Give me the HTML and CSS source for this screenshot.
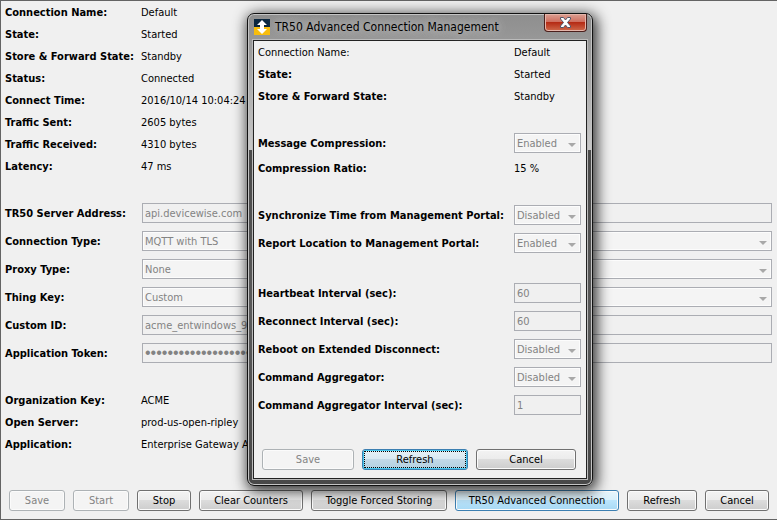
FILE: index.html
```
<!DOCTYPE html>
<html lang="en">
<head>
    <meta charset="utf-8">
    <title>TR50 Advanced Connection Management</title>
    <meta name="viewport" content="width=device-width, initial-scale=1">
    <link rel="stylesheet" href="styles.css">
</head>
<body>
    <main class="panel">
        <dl class="info">
            <dt>Connection Name:</dt><dd>Default</dd>
            <dt>State:</dt><dd>Started</dd>
            <dt>Store &amp; Forward State:</dt><dd>Standby</dd>
            <dt>Status:</dt><dd>Connected</dd>
            <dt>Connect Time:</dt><dd>2016/10/14 10:04:24</dd>
            <dt>Traffic Sent:</dt><dd>2605 bytes</dd>
            <dt>Traffic Received:</dt><dd>4310 bytes</dd>
            <dt>Latency:</dt><dd>47 ms</dd>
        </dl>
        <form class="fields">
            <label for="server">TR50 Server Address:</label>
            <input type="text" id="server" value="api.devicewise.com" disabled>
            <label for="connType">Connection Type:</label>
            <span class="combo"><select id="connType" disabled><option>MQTT with TLS</option></select></span>
            <label for="proxyType">Proxy Type:</label>
            <span class="combo"><select id="proxyType" disabled><option>None</option></select></span>
            <label for="thingKey">Thing Key:</label>
            <span class="combo"><select id="thingKey" disabled><option>Custom</option></select></span>
            <label for="customId">Custom ID:</label>
            <input type="text" id="customId" value="acme_entwindows_9_" disabled>
            <label for="token">Application Token:</label>
            <input type="password" id="token" class="token" value="********************" autocomplete="off" disabled>
        </form>
        <dl class="info">
            <dt>Organization Key:</dt><dd>ACME</dd>
            <dt>Open Server:</dt><dd>prod-us-open-ripley</dd>
            <dt>Application:</dt><dd>Enterprise Gateway A</dd>
        </dl>
        <div class="buttons">
            <button class="w-small" disabled>Save</button>
            <button class="w-small" disabled>Start</button>
            <button class="w-stop">Stop</button>
            <button class="w-clear">Clear Counters</button>
            <button class="w-toggle">Toggle Forced Storing</button>
            <button class="w-advanced active">TR50 Advanced Connection</button>
            <button class="w-refresh">Refresh</button>
            <button class="w-cancel">Cancel</button>
        </div>
    </main>

    <section class="dialog" role="dialog" aria-labelledby="dialogTitle">
        <header class="titlebar">
            <svg class="logo" viewBox="0 0 16 16" width="16" height="16" aria-hidden="true">
                <rect width="16" height="8" fill="#0b2740"/>
                <rect y="8" width="16" height="8" fill="#f8bd0c"/>
                <path d="M8 1l5 5h-3v4h3l-5 5-5-5h3V6H3z" fill="#fff"/>
            </svg>
            <h1 id="dialogTitle">TR50 Advanced Connection Management</h1>
            <button class="close" aria-label="Close">
                <svg viewBox="0 0 13 11" width="13" height="11">
                    <path d="M1.500 .5h3l2 2.500 2-2.500h3v1.500L8.500 5.500l3 3.500v1.500h-3l-2-2.500-2 2.500h-3V9l3-3.500-3-3.500z" fill="#fff" stroke="#52566a"/>
                </svg>
            </button>
        </header>
        <div class="client">
            <dl class="info">
                <dt class="plain">Connection Name:</dt><dd>Default</dd>
                <dt>State:</dt><dd>Started</dd>
                <dt>Store &amp; Forward State:</dt><dd>Standby</dd>
            </dl>
            <form class="fields">
                <label for="compression">Message Compression:</label>
                <span class="combo"><select id="compression" disabled><option>Enabled</option></select></span>
            </form>
            <dl class="info joined">
                <dt>Compression Ratio:</dt><dd>15 %</dd>
            </dl>
            <form class="fields">
                <label for="syncTime">Synchronize Time from Management Portal:</label>
                <span class="combo"><select id="syncTime" disabled><option>Disabled</option></select></span>
                <label for="location">Report Location to Management Portal:</label>
                <span class="combo"><select id="location" disabled><option>Enabled</option></select></span>
            </form>
            <form class="fields">
                <label for="heartbeat">Heartbeat Interval (sec):</label>
                <input type="text" id="heartbeat" value="60" disabled>
                <label for="reconnect">Reconnect Interval (sec):</label>
                <input type="text" id="reconnect" value="60" disabled>
                <label for="reboot">Reboot on Extended Disconnect:</label>
                <span class="combo"><select id="reboot" disabled><option>Disabled</option></select></span>
                <label for="aggregator">Command Aggregator:</label>
                <span class="combo"><select id="aggregator" disabled><option>Disabled</option></select></span>
                <label for="aggInterval">Command Aggregator Interval (sec):</label>
                <input type="text" id="aggInterval" value="1" disabled>
            </form>
            <div class="buttons">
                <button class="w-save" disabled>Save</button>
                <button class="w-default focused">Refresh</button>
                <button class="w-close">Cancel</button>
            </div>
        </div>
    </section>
</body>
</html>
```
FILE: styles.css
```
* {
    box-sizing: border-box;
}
body {
    margin: 0;
    min-height: 100vh;
    display: flex;
    background-color: #f0f0f0;
    color: #000;
}
body, input, select, button {
    font-family: "DejaVu Sans Condensed", Tahoma, sans-serif;
    font-size: 11px;
}
.panel {
    flex: 1;
    display: flex;
    flex-direction: column;
    gap: 22px;
    border: 1px solid #646464;
    padding: 0 4px 8px;
}
.info, .fields {
    display: grid;
    grid-template-columns: 136px 1fr;
    align-items: center;
    margin: 0;
    white-space: nowrap;
}
.info {
    grid-auto-rows: 22px;
}
.fields {
    grid-template-columns: 137px 1fr;
    grid-auto-rows: 28px;
    padding-right: 1px;
}
dt, label {
    font-weight: bold;
}
dd {
    margin: 0;
}
.plain {
    font-weight: normal;
}
input, select {
    width: 100%;
    height: 20px;
    margin: 0;
    padding: 0 2px;
    border: 1px solid #abadb3;
    border-radius: 0;
    background-color: #f0f0f0;
    color: #838383;
    opacity: 1;
}
/* bigger bullets */
.token {
    font-family: "Liberation Sans", Arial, sans-serif;
    font-size: 16px;
}
select {
    display: block;
    appearance: none;
    background-color: #f4f4f4;
    box-shadow: inset 0 0 0 1px #fcfcfc;
}
.combo {
    position: relative;
}
/* drop-down arrow */
.combo::after {
    content: "";
    position: absolute;
    right: 5px;
    top: 10px;
    border: 4px solid transparent;
    border-top-color: #a8a8a8;
    border-bottom: 0;
}
.buttons {
    display: flex;
    gap: 8px;
    margin-top: auto;
    padding: 0 4px;
}
button {
    height: 21px;
    padding: 0;
    border: 1px solid #707070;
    border-radius: 3px;
    background: linear-gradient(#f3f3f3, #ebebeb 50%, #dcdcdc 50%, #cdcdcd);
    box-shadow: inset 0 0 0 1px #fbfbfb;
    color: #000;
    white-space: nowrap;
}
button:disabled {
    border-color: #adb2b5;
    background: #f4f4f4;
    color: #838383;
}
.active {
    border-color: #3c7fb1;
    background: linear-gradient(#e8f5fc, #d8f0fc 50%, #bce5fc 50%, #a7d9f5);
}
.w-small { width: 56px; }
.w-stop { width: 54px; }
.w-clear { width: 104px; }
.w-toggle { width: 136px; }
.w-advanced { width: 164px; }
.w-refresh { width: 70px; }
.w-cancel { width: 64px; }
.w-save { width: 92px; }
.w-default { width: 106px; }
.w-close { width: 100px; }

.dialog {
    position: absolute;
    left: 247px;
    top: 13px;
    width: 346px;
    padding: 0 5px 6px;
    border: 1px solid #111;
    border-radius: 7px;
    background: linear-gradient(#8e8e8e, #999 30px, #c8c8c8 136px, #4a4a4a 136px, #5a5a5a 300px, #484848);
    box-shadow: inset 0 0 0 1px #c4c4c4, 2px 3px 14px 2px rgba(0, 0, 0, 0.8);
}
.titlebar {
    display: flex;
    align-items: center;
    height: 26px;
    gap: 5px;
    padding-left: 1px;
}
.titlebar h1 {
    flex: 1;
    margin: 0;
    font-size: 12px;
    font-weight: normal;
    text-shadow: 0 0 8px #ccc, 0 0 12px #bbb;
}
.close {
    align-self: flex-start;
    display: flex;
    align-items: center;
    justify-content: center;
    width: 43px;
    height: 18px;
    border: 1px solid #4b1f1c;
    border-top: 0;
    border-radius: 0 0 4px 4px;
    background: linear-gradient(#dba093, #cf6f60 45%, #b52b15 50%, #cf6a4c);
    box-shadow: inset 0 0 0 1px #e5b5aa;
}
.client {
    display: flex;
    flex-direction: column;
    gap: 22px;
    border: 1px solid #222;
    padding: 0 4px 8px;
    background-color: #f0f0f0;
    box-shadow: 0 0 0 1px #bbb;
}
.client .info, .client .fields {
    grid-template-columns: 1fr 67px;
    padding-right: 1px;
}
.client .joined {
    margin-top: -22px;
}
.client .buttons {
    margin-top: 8px;
}
.focused {
    border-color: #3c7fb1;
    background: linear-gradient(#e6f1f6, #d8e8f1 50%, #c2d9e7 50%, #b4d0e1);
    box-shadow: inset 0 0 0 1px #48c8ee;
    outline: 1px dotted #000;
    outline-offset: -3px;
}
```
